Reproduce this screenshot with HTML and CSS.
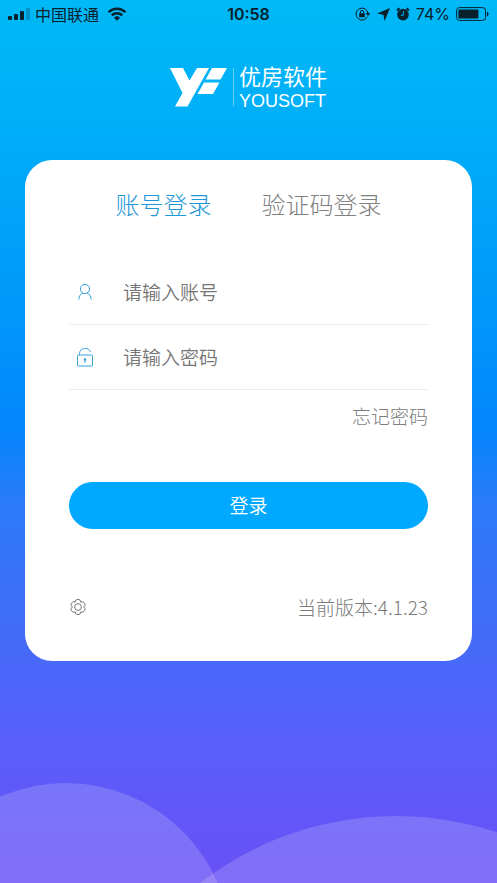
FILE: index.html
```html
<!DOCTYPE html>
<html lang="zh-CN">
<head>
<meta charset="utf-8">
<meta name="viewport" content="width=device-width, initial-scale=1">
<title>优房软件</title>
<link rel="stylesheet" href="styles.css">
</head>
<body>
<div class="screen">
  <svg class="hills" viewBox="0 0 497 100" aria-hidden="true">
    <circle cx="66" cy="165" r="165"/>
    <circle cx="396" cy="353" r="320"/>
  </svg>
  <header class="status">
    <div class="status-side">
      <svg width="23" height="12" viewBox="0 0 23 12" aria-hidden="true">
        <rect x="0" y="8" width="4" height="4" rx="1"/>
        <rect x="6" y="6" width="4" height="6" rx="1"/>
        <rect x="12" y="3" width="4" height="9" rx="1"/>
        <rect class="faint" x="18" y="0" width="4" height="12" rx="1"/>
      </svg>
      <span class="carrier">中国联通</span>
      <svg class="wifi" width="20" height="14" viewBox="0 0 20 14" aria-hidden="true">
        <path class="line wave" d="M1.6 5.2a12 12 0 0 1 16.8 0M4.8 8.4a7.4 7.4 0 0 1 10.4 0"/>
        <path d="M7 10.7a4.3 4.3 0 0 1 6 0l-3 3z"/>
      </svg>
    </div>
    <time class="clock">10:58</time>
    <div class="status-side end">
      <svg width="16" height="14" viewBox="0 0 16 14" aria-hidden="true">
        <path class="line" d="M12.5 9.6A6 6 0 1 1 13 6.3"/>
        <path d="M10.6 6h4.8L13 9zM4.2 6.3h5.6v4H4.2z"/>
        <path class="line" d="M5.4 6.5V5a1.6 1.6 0 0 1 3.2 0v1.5"/>
      </svg>
      <svg width="13" height="13" viewBox="0 0 13 13" aria-hidden="true"><path d="M13 0 7.6 13 6.4 6.7 0 5.6z"/></svg>
      <svg width="14" height="14" viewBox="0 0 14 14" aria-hidden="true">
        <circle cx="7" cy="7.6" r="5.8"/>
        <path class="line thick" d="M1 3.4 3.4 1.2M13 3.4l-2.4-2.2"/>
        <path class="hand" d="M7.4 4.2v4H4.8"/>
      </svg>
      <span class="percent">74%</span>
      <svg width="33" height="14" viewBox="0 0 33 14" aria-hidden="true">
        <rect class="line" x=".6" y=".6" width="29" height="12.8" rx="3"/>
        <rect x="2.4" y="2.4" width="20" height="9.2" rx="1"/>
        <path d="M31 4.7c2 .8 2 3.8 0 4.6z"/>
      </svg>
    </div>
  </header>

  <div class="brand">
    <svg width="57" height="39" viewBox="0 0 57 39" aria-hidden="true">
      <path d="M0 0h13l6.5 12.5L27 0h12L17.5 38.5H5L12.5 25z"/>
      <path d="M42 0h15l-6.5 11.5h-15z"/>
      <path d="M34 14.5h15.5L43 26H27.5z"/>
    </svg>
    <span class="brand-rule"></span>
    <div class="brand-name">
      <span class="brand-cn">优房软件</span>
      <span class="brand-en">YOUSOFT</span>
    </div>
  </div>

  <main class="card">
    <nav class="tabs">
      <button type="button" class="tab active">账号登录</button>
      <button type="button" class="tab">验证码登录</button>
    </nav>
    <form>
      <div class="field">
        <label for="account" aria-label="账号">
          <svg width="16" height="18" viewBox="0 0 16 18" aria-hidden="true">
            <circle cx="8" cy="6" r="4.6"/>
            <path d="M1.8 16.5c.2-3.5 1.8-5.8 4.2-6.6M14.2 16.5c-.2-3.5-1.8-5.8-4.2-6.6"/>
          </svg>
        </label>
        <input id="account" type="text" placeholder="请输入账号">
      </div>
      <div class="field">
        <label for="password" aria-label="密码">
          <svg width="18" height="20" viewBox="0 0 18 20" aria-hidden="true">
            <rect x="1.5" y="8" width="15" height="11" rx="1"/>
            <path d="M3.5 8V6.5C3.5 0 13.5 0 14.5 5M9 12.5V16"/>
            <circle class="dot" cx="9" cy="12.5" r="1.3"/>
          </svg>
        </label>
        <input id="password" type="password" placeholder="请输入密码">
      </div>
      <a class="forgot" href="#">忘记密码</a>
      <button type="submit" class="submit">登录</button>
    </form>
    <footer class="foot">
      <button type="button" class="gear" aria-label="设置">
        <svg width="18" height="18" viewBox="0 0 18 18" aria-hidden="true">
          <path d="M6.2 4.15a2.8 2.8 0 0 1 5.6 0A2.8 2.8 0 0 1 14.6 9a2.8 2.8 0 0 1-2.8 4.85a2.8 2.8 0 0 1-5.6 0A2.8 2.8 0 0 1 3.4 9a2.8 2.8 0 0 1 2.8-4.85z"/>
          <circle cx="9" cy="9" r="3.4"/>
        </svg>
      </button>
      <span>当前版本:4.1.23</span>
    </footer>
  </main>
</div>
</body>
</html>
```
FILE: styles.css
```css
* {
  box-sizing: border-box;
}

body {
  margin: 0;
  font-family: "Noto Sans CJK SC", sans-serif;
  font-weight: 300;
}

button,
input {
  font: inherit;
  border: 0;
  padding: 0;
  background: none;
}

svg {
  display: block;
  flex: none;
}

.screen {
  position: relative;
  min-height: 100vh;
  overflow: hidden;
  background: linear-gradient(#00b9f6 0%, #00aef8 14%, #0098fb 35%, #0485fb 49%, #2c7bf8 57%, #4669f8 74%, #575ffa 83%, #6a50f5 100%);
}

.hills {
  position: absolute;
  bottom: 0;
  left: 0;
  width: 100%;
  fill: rgba(255, 255, 255, 0.17);
}

.status {
  display: grid;
  grid-template-columns: 1fr auto 1fr;
  align-items: center;
  height: 28px;
  padding: 0 8px;
  color: #06202c;
  fill: #06202c;
  font-size: 16px;
  font-weight: 400;
}

.status-side {
  display: flex;
  align-items: center;
  gap: 4px;
}

.end {
  justify-content: flex-end;
  gap: 6px;
}

.wifi {
  margin-left: 4px;
}

.faint {
  opacity: 0.25;
}

.line {
  fill: none;
  stroke: #06202c;
  stroke-width: 1;
}

.thick {
  stroke-width: 2;
}

.wave {
  stroke-width: 2.5;
}

.hand {
  fill: none;
  stroke: #00b9f6;
  stroke-width: 1;
}

.clock,
.percent {
  font-family: Inter, "Liberation Sans", sans-serif;
}

.clock {
  font-weight: 600;
}

.brand {
  position: relative;
  display: flex;
  justify-content: center;
  align-items: center;
  height: 44px;
  margin-top: 37px;
  color: #fff;
  fill: #fff;
}

.brand-rule {
  width: 1px;
  height: 38px;
  margin: 0 5px 0 6px;
  background: rgba(255, 255, 255, 0.4);
}

.brand-name {
  display: flex;
  flex-direction: column;
  font-weight: 400;
}

.brand-cn {
  font-size: 22px;
  line-height: 28px;
}

.brand-en {
  font-family: "Liberation Sans", sans-serif;
  font-size: 18px;
  line-height: 24px;
}

.card {
  position: relative;
  margin: 51px 25px 0;
  padding: 24px 44px 40px;
  border-radius: 27px;
  background: #fff;
}

.tabs {
  display: flex;
  justify-content: center;
  gap: 50px;
  margin-bottom: 36px;
}

.tab {
  color: #808080;
  font-size: 24px;
  line-height: 40px;
}

.active {
  color: #1c98d8;
}

.field {
  display: flex;
  align-items: center;
  height: 65px;
  border-bottom: 1px solid #ebebeb;
}

.field label {
  display: flex;
  justify-content: center;
  width: 32px;
  margin-right: 22px;
  fill: none;
  stroke: #36a3dc;
}

.field .dot {
  fill: #36a3dc;
  stroke: none;
}

.field input {
  flex: 1;
  min-width: 0;
  color: #555;
  font-size: 19px;
  font-weight: 350;
  line-height: 28px;
  outline: 0;
}

.field input::placeholder {
  color: #757575;
  opacity: 1;
}

.forgot {
  display: block;
  margin-top: 12px;
  color: #7c7c7c;
  font-size: 19px;
  line-height: 28px;
  text-align: right;
  text-decoration: none;
}

.submit {
  display: block;
  width: 100%;
  height: 47px;
  margin-top: 52px;
  padding-bottom: 2px;
  border-radius: 24px;
  background: #00a9ff;
  color: #fff;
  font-size: 19px;
  font-weight: 350;
}

.foot {
  display: flex;
  justify-content: space-between;
  align-items: center;
  margin-top: 64px;
  color: #7c7c7c;
  font-size: 19px;
  line-height: 28px;
}

.gear {
  fill: none;
  stroke: #777;
}
```
